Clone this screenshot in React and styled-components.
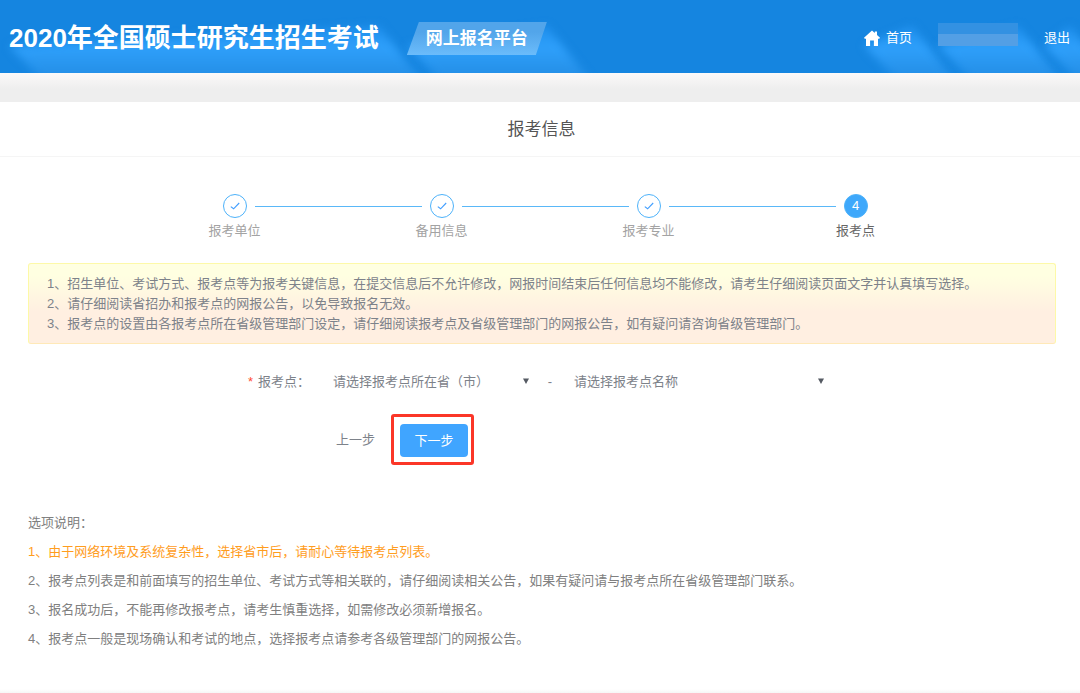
import React, { useState } from 'react';
import styled, { createGlobalStyle } from 'styled-components';

const GlobalStyle = createGlobalStyle`
  * {
    box-sizing: border-box;
  }
  body {
    margin: 0;
    background: #fff;
    color: #7d828a;
    font-family: 'Liberation Sans', 'Noto Sans CJK SC', sans-serif;
    font-size: 13px;
    line-height: 20px;
  }
  button, select {
    font: inherit;
    color: inherit;
  }
`;

const Header = styled.header`
  display: flex;
  align-items: stretch;
  height: 73px;
  padding: 0 10px 0 9px;
  overflow: hidden;
  color: #fff;
  background: #1585e0;
`;

const HeaderItem = styled.div`
  position: relative;
  isolation: isolate;
  display: flex;
  align-items: center;
  padding-top: ${(props) => props.$top || 0}px;
  padding-bottom: ${(props) => props.$bottom || 0}px;
`;

// light long shadow that falls to the bottom right of header items
const LongShadow = styled.span`
  position: absolute;
  z-index: -1;
  top: 26px;
  right: -44px;
  bottom: -8px;
  left: 0;
  filter: blur(4px);

  &::before {
    content: '';
    display: block;
    height: 100%;
    background: linear-gradient(#1f8fec, #2fa0fb 40%, #2590e8 85%);
    clip-path: polygon(
      0 36%,
      calc(100% - 44px) 0,
      100% 100%,
      34px 100%
    );
  }
`;

const SiteTitle = styled.h1`
  margin: 0;
  font-size: 26px;
  line-height: 36px;
  font-weight: bold;
  white-space: nowrap;
`;

const Badge = styled.div`
  width: 140px;
  height: 33px;
  margin-left: 28px;
  font-size: 17px;
  line-height: 33px;
  font-weight: bold;
  text-align: center;
  background: linear-gradient(#52a5ea 30%, #6bbcfb);
  clip-path: polygon(12px 0, 100% 0, calc(100% - 11px) 100%, 0 100%);
`;

const BadgeShadow = styled(LongShadow)`
  left: 28px;
`;

const TopNav = styled.nav`
  display: flex;
  align-items: stretch;
  gap: 26px;
  margin-left: auto;
`;

const TopLink = styled.a`
  display: flex;
  align-items: center;
  gap: 6px;
  color: #fff;
  text-decoration: none;
  white-space: nowrap;
`;

const MaskedUser = styled.div`
  width: 80px;
  height: 23px;
  background: linear-gradient(#3391e2 50%, #539fe5 50%);
`;

const Band = styled.div`
  height: 29px;
  background: linear-gradient(#fbf9f9, #eee 55%);
`;

const PageTitle = styled.h2`
  margin: 0;
  padding: 16px 0 14px 3px;
  font-size: 17px;
  line-height: 24px;
  font-weight: normal;
  text-align: center;
  color: #555;
  border-bottom: 1px solid #f5f5f5;
`;

const Main = styled.main`
  padding: 37px 24px 36px 28px;
`;

const Steps = styled.ol`
  display: flex;
  margin: 0;
  padding: 0 97px 0 103px;
  list-style: none;
`;

const Step = styled.li`
  flex: 1;
  text-align: center;
  color: ${(props) => (props.$current ? '#666' : '#a3a3a3')};
`;

const StepMark = styled.div`
  display: flex;
  align-items: center;
  gap: 8px;
`;

const StepLine = styled.span`
  flex: 1;
  height: 1px;
  background: ${(props) => (props.$hidden ? 'transparent' : '#5ab8f8')};
`;

const StepCircle = styled.span`
  display: flex;
  align-items: center;
  justify-content: center;
  width: 24px;
  height: 24px;
  border: 1px solid #4db2fa;
  border-radius: 50%;
  color: ${(props) => (props.$current ? '#fff' : '#409eff')};
  background: ${(props) => (props.$current ? '#3ea8fb' : '#fff')};
`;

const StepLabel = styled.div`
  padding-top: 3px;
`;

const Notice = styled.div`
  margin-top: 22px;
  padding: 10px 18px 9px;
  border: 1px solid #fdf9a8;
  border-bottom-color: #ffe9b8;
  border-radius: 3px;
  background: linear-gradient(#ffffe1 15%, #ffefe1 60%);

  p {
    margin: 0;
    line-height: 20px;
  }
`;

const FormRow = styled.div`
  display: flex;
  align-items: center;
  margin-top: 22px;
  padding-left: 220px;
`;

const Label = styled.label`
  width: 75px;
`;

const Required = styled.span`
  margin-right: 5px;
  color: #ff4d30;
`;

const SelectBox = styled.div`
  position: relative;
  width: ${(props) => props.$width}px;

  svg {
    position: absolute;
    top: 12px;
    right: 7px;
    pointer-events: none;
  }
`;

const Select = styled.select`
  width: 100%;
  height: 32px;
  padding: 0 24px 0 10px;
  border: none;
  background: transparent;
  appearance: none;
`;

const Dash = styled.span`
  width: 28px;
  text-align: center;
`;

const Actions = styled.div`
  display: flex;
  align-items: center;
  gap: 16px;
  margin-top: 16px;
  padding-left: 308px;
`;

const PrevButton = styled.button`
  padding: 0;
  border: none;
  background: none;
`;

const Highlight = styled.div`
  padding: 7px 3px 5px 6px;
  border: 3px solid #fb3628;
  border-radius: 3px;
`;

const NextButton = styled.button`
  display: block;
  width: 68px;
  height: 33px;
  padding: 0;
  border: none;
  border-radius: 4px;
  color: #fff;
  background: #40a5ff;
`;

const Notes = styled.section`
  margin-top: 43px;
  line-height: 29px;
  color: #808080;

  p {
    margin: 0;
  }
`;

const NoteLine = styled.p`
  color: ${(props) => (props.$warn ? '#ff9d1e' : 'inherit')};
`;

const BottomShade = styled.div`
  height: 6px;
  background: linear-gradient(#fff, #f1f1f1);
`;

const steps = ['报考单位', '备用信息', '报考专业', '报考点'];
const current = 3;

const notices = [
  '1、招生单位、考试方式、报考点等为报考关键信息，在提交信息后不允许修改，网报时间结束后任何信息均不能修改，请考生仔细阅读页面文字并认真填写选择。',
  '2、请仔细阅读省招办和报考点的网报公告，以免导致报名无效。',
  '3、报考点的设置由各报考点所在省级管理部门设定，请仔细阅读报考点及省级管理部门的网报公告，如有疑问请咨询省级管理部门。',
];

const notes = [
  {
    text: '1、由于网络环境及系统复杂性，选择省市后，请耐心等待报考点列表。',
    warn: true,
  },
  {
    text: '2、报考点列表是和前面填写的招生单位、考试方式等相关联的，请仔细阅读相关公告，如果有疑问请与报考点所在省级管理部门联系。',
  },
  {
    text: '3、报名成功后，不能再修改报考点，请考生慎重选择，如需修改必须新增报名。',
  },
  {
    text: '4、报考点一般是现场确认和考试的地点，选择报考点请参考各级管理部门的网报公告。',
  },
];

const HomeIcon = () => (
  <svg width="16" height="16" viewBox="0 0 16 16" fill="#fff" aria-hidden="true">
    <path d="M8 0.4 L10.8 3 V1.6 H13 V5 L16 7.8 L15 9 L14 8.4 V16 H9.9 V10.6 H6.1 V16 H2 V8.4 L1 9 L0 7.8 Z" />
  </svg>
);

const CheckIcon = () => (
  <svg
    width="10"
    height="8"
    viewBox="0 0 10 8"
    fill="none"
    stroke="currentColor"
    strokeWidth="1.1"
    aria-hidden="true"
  >
    <path d="M0.8 4.6 L3.6 6.8 L9.2 1" />
  </svg>
);

const Caret = () => (
  <svg width="6" height="6" viewBox="0 0 6 6" fill="#555a63" aria-hidden="true">
    <path d="M0 0.5 H6 L3 6 Z" />
  </svg>
);

export default function App() {
  const [province, setProvince] = useState('');
  const [site, setSite] = useState('');

  return (
    <>
      <GlobalStyle />
      <Header>
        <HeaderItem $top={2}>
          <LongShadow />
          <SiteTitle>2020年全国硕士研究生招生考试</SiteTitle>
        </HeaderItem>
        <HeaderItem $top={4}>
          <BadgeShadow />
          <Badge>网上报名平台</Badge>
        </HeaderItem>
        <TopNav>
          <HeaderItem $top={3}>
            <LongShadow />
            <TopLink href="#home">
              <HomeIcon />
              首页
            </TopLink>
          </HeaderItem>
          <HeaderItem $bottom={4}>
            <LongShadow />
            <MaskedUser />
          </HeaderItem>
          <HeaderItem $top={3}>
            <LongShadow />
            <TopLink href="#logout">退出</TopLink>
          </HeaderItem>
        </TopNav>
      </Header>
      <Band />
      <PageTitle>报考信息</PageTitle>
      <Main>
        <Steps>
          {steps.map((label, i) => (
            <Step key={label} $current={i === current}>
              <StepMark>
                <StepLine $hidden={i === 0} />
                <StepCircle $current={i === current}>
                  {i < current ? <CheckIcon /> : i + 1}
                </StepCircle>
                <StepLine $hidden={i === current} />
              </StepMark>
              <StepLabel>{label}</StepLabel>
            </Step>
          ))}
        </Steps>
        <Notice>
          {notices.map((text) => (
            <p key={text}>{text}</p>
          ))}
        </Notice>
        <form onSubmit={(e) => e.preventDefault()}>
          <FormRow>
            <Label htmlFor="province">
              <Required>*</Required>报考点：
            </Label>
            <SelectBox $width={213}>
              <Select
                id="province"
                value={province}
                onChange={(e) => setProvince(e.target.value)}
              >
                <option value="">请选择报考点所在省（市）</option>
              </Select>
              <Caret />
            </SelectBox>
            <Dash>-</Dash>
            <SelectBox $width={267}>
              <Select
                aria-label="报考点名称"
                value={site}
                onChange={(e) => setSite(e.target.value)}
              >
                <option value="">请选择报考点名称</option>
              </Select>
              <Caret />
            </SelectBox>
          </FormRow>
          <Actions>
            <PrevButton type="button">上一步</PrevButton>
            <Highlight>
              <NextButton type="submit">下一步</NextButton>
            </Highlight>
          </Actions>
        </form>
        <Notes>
          <p>选项说明：</p>
          {notes.map(({ text, warn }) => (
            <NoteLine key={text} $warn={warn}>
              {text}
            </NoteLine>
          ))}
        </Notes>
      </Main>
      <BottomShade />
    </>
  );
}
